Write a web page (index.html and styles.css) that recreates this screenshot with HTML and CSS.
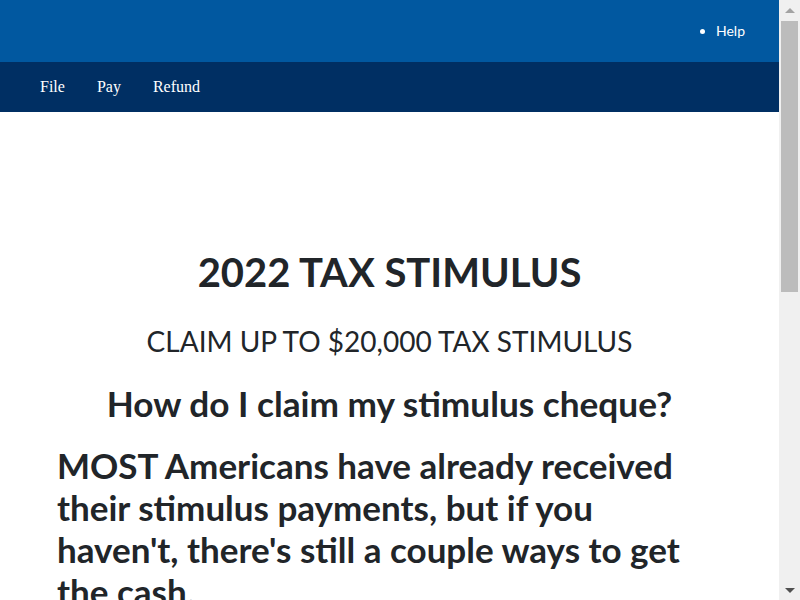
FILE: index.html
```html
<!DOCTYPE html>
<html lang="en">
<head>
<meta charset="utf-8">
<title>2022 Tax Stimulus</title>
<link rel="stylesheet" href="styles.css">
</head>
<body>
<div class="page">
  <header class="topbar">
    <ul class="util-links">
      <li><a href="#">Help</a></li>
    </ul>
  </header>
  <nav class="mainnav">
    <a href="#">File</a>
    <a href="#">Pay</a>
    <a href="#">Refund</a>
  </nav>
  <main class="content">
    <h1 class="title">2022 TAX STIMULUS</h1>
    <h2 class="subtitle">CLAIM UP TO $20,000 TAX STIMULUS</h2>
    <h3 class="question">How do I claim my stimulus cheque?</h3>
    <div class="article">
      <p class="lead">MOST Americans have already received their stimulus payments, but if you haven't, there's still a couple ways to get the cash.</p>
      <p class="body">If you did not receive the full amount of your payments, you may be eligible to claim the Recovery Rebate Credit on your tax return. Check your eligibility, gather your documents and submit your claim online.</p>
      <p class="body">The process only takes a few minutes. Please have your information ready before you begin.</p>
      <p class="body">Claims are processed in the order they are received.</p>
    </div>
  </main>
</div>
<div class="scrollbar" aria-hidden="true">
  <div class="sb-btn"><span class="sb-arrow-up"></span></div>
  <div class="sb-track"><div class="sb-thumb"></div></div>
  <div class="sb-btn"><span class="sb-arrow-down"></span></div>
</div>
</body>
</html>
```

FILE: styles.css
```css
html, body {
  margin: 0;
  padding: 0;
}
html {
  overflow: hidden;
}
body {
  font-family: Lato, "Open Sans", sans-serif;
  color: #212529;
  background: #fff;
}
.page {
  margin-right: 21px;
}
.topbar {
  height: 62px;
  box-sizing: border-box;
  padding-bottom: 2px;
  background: #0158a0;
  display: flex;
  justify-content: flex-end;
  align-items: center;
  padding-right: 34px;
}
.util-links {
  margin: 0;
  padding: 0 0 0 20px;
  list-style: disc;
  color: #fff;
  font-size: 14px;
}
.util-links a {
  color: #fff;
  text-decoration: none;
}
.mainnav {
  height: 50px;
  background: #002f63;
  display: flex;
  align-items: center;
  gap: 32px;
  padding-left: 40px;
  font-family: "Liberation Serif", "Times New Roman", serif;
  font-size: 16px;
}
.mainnav a {
  color: #fff;
  text-decoration: none;
}
.content {
  padding: 136px 0 200px;
}
.title {
  text-align: center;
  font-size: 40px;
  font-weight: 700;
  line-height: 1.2;
  margin: 0 0 29px;
}
.subtitle {
  text-align: center;
  font-size: 28px;
  font-weight: 400;
  line-height: 1.2;
  margin: 0 0 23px;
}
.question {
  text-align: center;
  font-size: 35.2px;
  font-weight: 700;
  line-height: 42px;
  margin: 0 0 20px;
}
.article {
  width: 640px;
  margin: 0 0 0 57px;
}
.lead {
  font-size: 35px;
  font-weight: 700;
  line-height: 42px;
  margin: 0 0 24px;
}
.body {
  font-size: 18px;
  line-height: 1.6;
  margin: 0 0 16px;
}
.scrollbar {
  position: fixed;
  top: 0;
  right: 0;
  width: 21px;
  height: 100vh;
  background: #f0f0f0;
  display: flex;
  flex-direction: column;
}
.sb-btn {
  height: 21px;
  display: flex;
  align-items: center;
  justify-content: center;
}
.sb-arrow-up {
  width: 0;
  height: 0;
  border-left: 5px solid transparent;
  border-right: 5px solid transparent;
  border-bottom: 5px solid #a3a3a3;
}
.sb-arrow-down {
  width: 0;
  height: 0;
  border-left: 5px solid transparent;
  border-right: 5px solid transparent;
  border-top: 5px solid #505050;
  margin-top: 2px;
}
.sb-track {
  flex: 1;
  padding: 0 2px;
}
.sb-thumb {
  height: 271px;
  background: #bcbcbc;
}
```
